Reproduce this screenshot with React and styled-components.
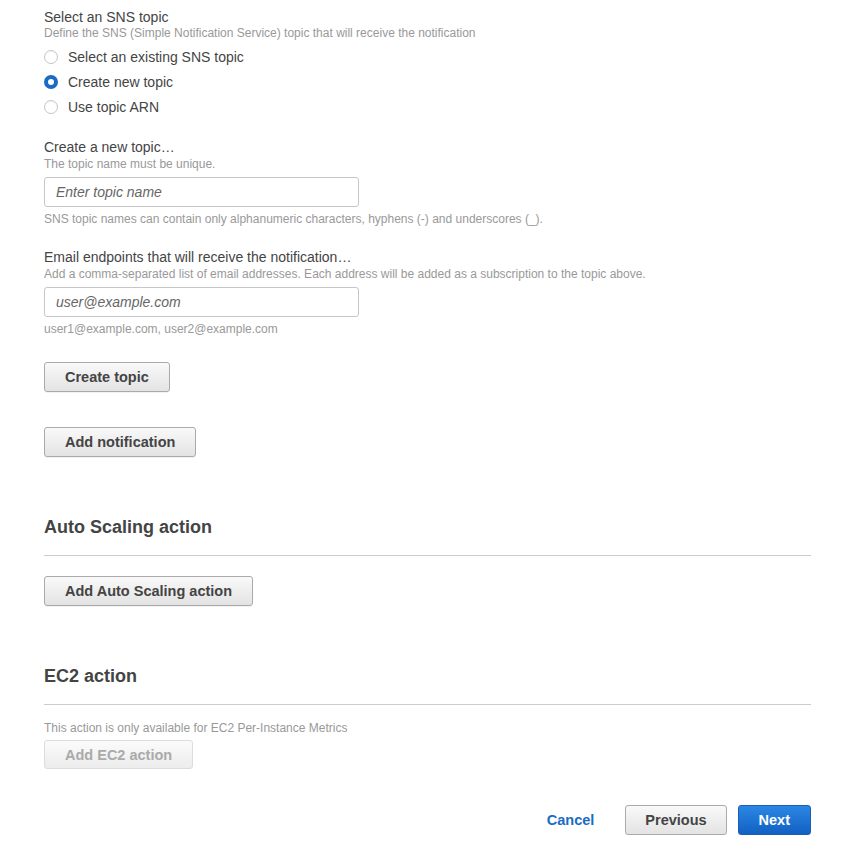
import React from "react";
import styled, { createGlobalStyle } from "styled-components";

const Global = createGlobalStyle`
  html, body { margin: 0; padding: 0; background: #fff; }
  body { font-family: "Liberation Sans", Arial, sans-serif; color: #444; }
  * { box-sizing: border-box; }
`;

const Page = styled.div`
  width: 868px;
  padding: 9px 57px 0 44px;
`;

const Field = styled.div`
  display: flex;
  flex-direction: column;
  margin-bottom: ${(p) => p.$mb || 0}px;
`;

const Label = styled.div`
  font-size: 14px;
  line-height: 17px;
  color: #444;
`;

const Desc = styled.div`
  font-size: 12px;
  line-height: 15px;
  color: #999;
  margin-top: ${(p) => p.$mt || 0}px;
`;

const RadioList = styled.div`
  display: flex;
  flex-direction: column;
  gap: 8px;
  margin-top: 7px;
`;

const RadioRow = styled.label`
  display: flex;
  align-items: center;
  height: 17px;
  font-size: 14px;
  color: #444;
`;

const RadioDot = styled.span`
  width: 14px;
  height: 14px;
  border-radius: 50%;
  margin-right: 10px;
  border: ${(p) => (p.$on ? "4px solid #1a6bc4" : "1px solid #c6c6c6")};
  background: #fff;
  box-shadow: ${(p) => (p.$on ? "none" : "inset 0 1px 1px rgba(0,0,0,0.05)")};
`;

const Input = styled.input`
  width: 315px;
  height: 30px;
  margin-top: 5px;
  border: 1px solid #c6c6c6;
  border-radius: 3px;
  padding: 0 11px;
  font-family: "Liberation Sans", Arial, sans-serif;
  font-size: 14px;
  color: #444;
  outline: none;
  &::placeholder {
    color: #666;
    font-style: italic;
  }
`;

const Button = styled.button`
  align-self: flex-start;
  height: ${(p) => p.$h || 30}px;
  margin-top: ${(p) => p.$mt || 0}px;
  padding: 0 ${(p) => p.$px || 20}px;
  border-radius: 3px;
  font-family: "Liberation Sans", Arial, sans-serif;
  font-size: 14.5px;
  font-weight: bold;
  cursor: pointer;
  border: 1px solid ${(p) => (p.$primary ? "#1a5fb4" : p.$disabled ? "#dcdcdc" : "#aaa")};
  color: ${(p) => (p.$primary ? "#fff" : p.$disabled ? "#aaa" : "#444")};
  background: ${(p) =>
    p.$primary
      ? "linear-gradient(#2b87e3, #1261c2)"
      : p.$disabled
      ? "linear-gradient(#fbfbfb, #ececec)"
      : "linear-gradient(#f9f9f9, #e3e3e3)"};
  box-shadow: ${(p) => (p.$disabled ? "none" : "0 1px 0 rgba(0,0,0,0.05)")};
`;

const Section = styled.div`
  margin-top: ${(p) => p.$mt || 0}px;
`;

const Heading = styled.h2`
  margin: 0;
  font-size: 18px;
  line-height: 22px;
  font-weight: bold;
  color: #444;
  padding-bottom: 17px;
  border-bottom: 1px solid #ccc;
`;

const Footer = styled.div`
  display: flex;
  justify-content: flex-end;
  align-items: center;
  margin-top: 36px;
  gap: 11px;
`;

const LinkButton = styled.a`
  font-size: 14.5px;
  font-weight: bold;
  color: #1a6bc4;
  margin-right: 20px;
  cursor: pointer;
`;

export default function App() {
  return (
    <>
      <Global />
      <Page>
        <Field $mb={24}>
          <Label>Select an SNS topic</Label>
          <Desc>Define the SNS (Simple Notification Service) topic that will receive the notification</Desc>
          <RadioList>
            <RadioRow><RadioDot />Select an existing SNS topic</RadioRow>
            <RadioRow><RadioDot $on />Create new topic</RadioRow>
            <RadioRow><RadioDot />Use topic ARN</RadioRow>
          </RadioList>
        </Field>

        <Field $mb={22}>
          <Label>Create a new topic…</Label>
          <Desc $mt={1}>The topic name must be unique.</Desc>
          <Input placeholder="Enter topic name" />
          <Desc $mt={5}>SNS topic names can contain only alphanumeric characters, hyphens (-) and underscores (_).</Desc>
        </Field>

        <Field $mb={25}>
          <Label>Email endpoints that will receive the notification…</Label>
          <Desc $mt={1}>Add a comma-separated list of email addresses. Each address will be added as a subscription to the topic above.</Desc>
          <Input placeholder="user@example.com" />
          <Desc $mt={5}>user1@example.com, user2@example.com</Desc>
        </Field>

        <Field $mb={35}>
          <Button>Create topic</Button>
        </Field>

        <Field>
          <Button>Add notification</Button>
        </Field>

        <Section $mt={59}>
          <Heading>Auto Scaling action</Heading>
          <Field>
            <Button $mt={20}>Add Auto Scaling action</Button>
          </Field>
        </Section>

        <Section $mt={59}>
          <Heading>EC2 action</Heading>
          <Desc $mt={16}>This action is only available for EC2 Per-Instance Metrics</Desc>
          <Field>
            <Button $disabled $h={29} $mt={4} disabled>Add EC2 action</Button>
          </Field>
        </Section>

        <Footer>
          <LinkButton>Cancel</LinkButton>
          <Button $px={19}>Previous</Button>
          <Button $primary>Next</Button>
        </Footer>
      </Page>
    </>
  );
}
